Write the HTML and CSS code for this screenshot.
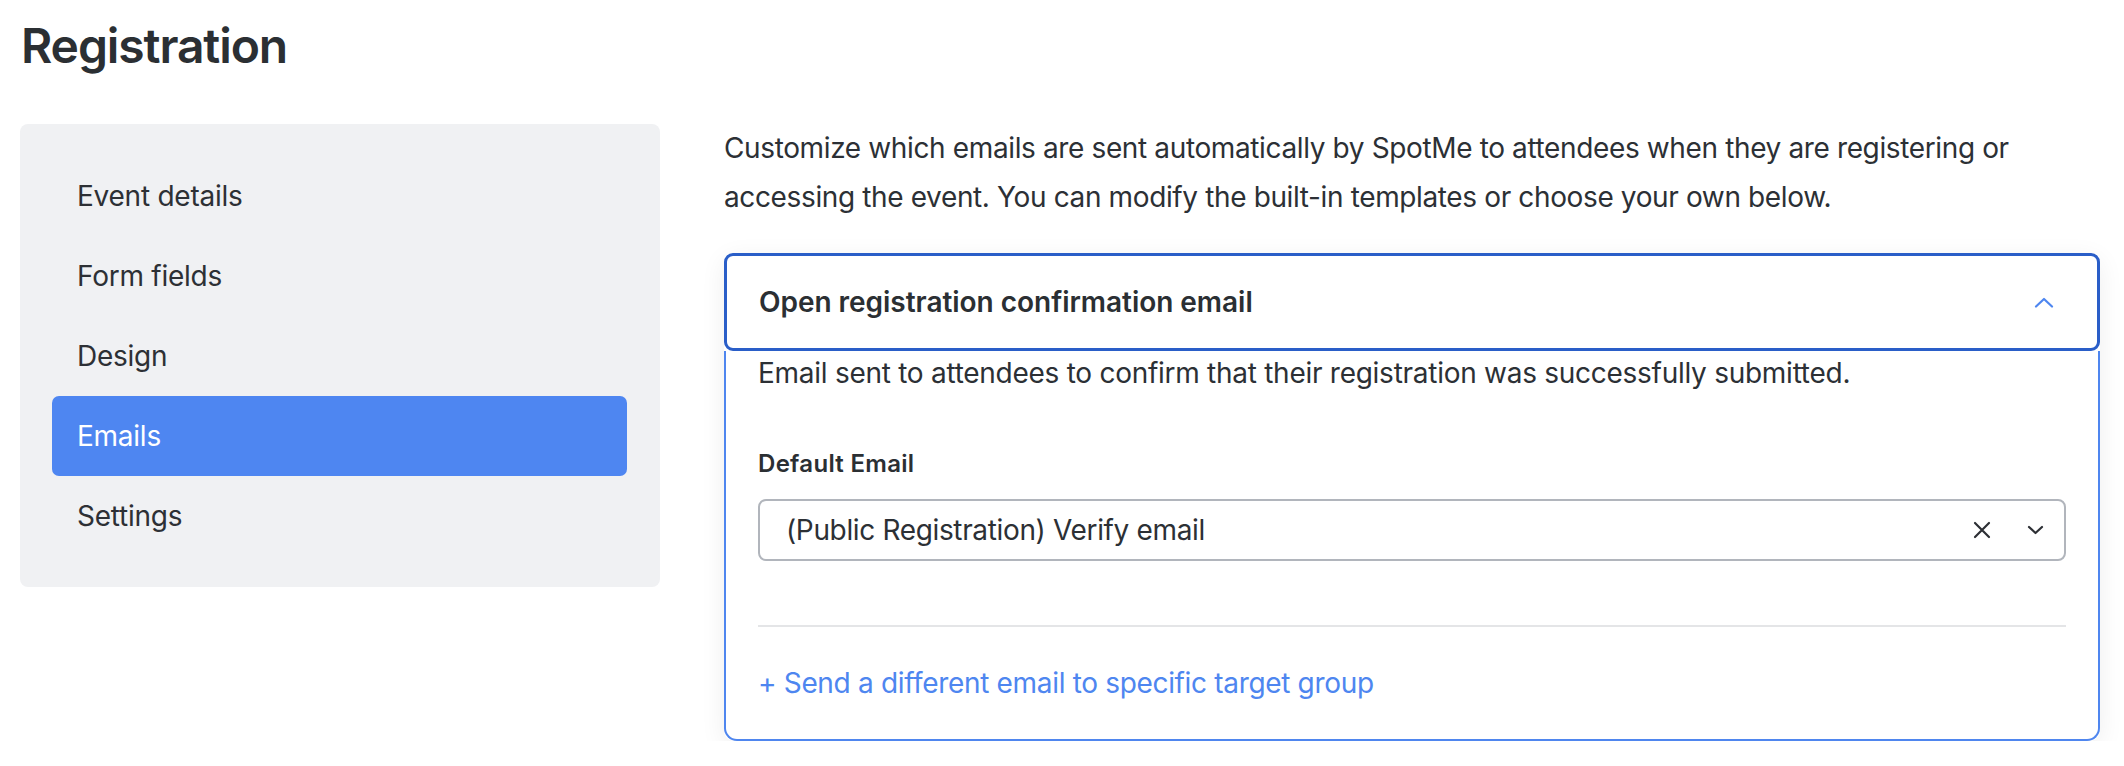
FILE: index.html
```html
<!DOCTYPE html>
<html lang="en">
<head>
<meta charset="utf-8">
<title>Registration</title>
<link rel="stylesheet" href="styles.css">
</head>
<body>
<div class="page">
  <h1 class="page-title">Registration</h1>
  <div class="layout">
    <nav class="sidenav">
      <a class="nav-item">Event details</a>
      <a class="nav-item">Form fields</a>
      <a class="nav-item">Design</a>
      <a class="nav-item active">Emails</a>
      <a class="nav-item">Settings</a>
    </nav>
    <main class="content">
      <p class="intro">Customize which emails are sent automatically by SpotMe to attendees when they are registering or accessing the event. You can modify the built-in templates or choose your own below.</p>
      <section class="card">
        <header class="card-header">
          <h2 class="card-title">Open registration confirmation email</h2>
          <svg class="chev-up" width="20" height="11" viewBox="0 0 20 11"><polyline points="2,9.5 10,2 18,9.5" fill="none" stroke="currentColor" stroke-width="2.2" stroke-linecap="round" stroke-linejoin="round"/></svg>
        </header>
        <div class="card-body">
          <p class="card-desc">Email sent to attendees to confirm that their registration was successfully submitted.</p>
          <label class="field-label">Default Email</label>
          <div class="select">
            <span class="select-value">(Public Registration) Verify email</span>
            <span class="select-icons">
              <svg class="icon-x" width="18" height="18" viewBox="0 0 18 18"><path d="M2 2L16 16M16 2L2 16" fill="none" stroke="currentColor" stroke-width="2.2" stroke-linecap="round"/></svg>
              <svg class="icon-down" width="17" height="10" viewBox="0 0 17 10"><polyline points="2,2 8.5,8 15,2" fill="none" stroke="currentColor" stroke-width="2.2" stroke-linecap="round" stroke-linejoin="round"/></svg>
            </span>
          </div>
          <hr class="divider">
          <a class="add-link">+ Send a different email to specific target group</a>
        </div>
      </section>
    </main>
  </div>
</div>
</body>
</html>
```

FILE: styles.css
```css
* { box-sizing: border-box; }
html, body { margin: 0; padding: 0; background: #ffffff; }
body {
  font-family: Inter, "Noto Sans", "Liberation Sans", sans-serif;
  color: #2c3035;
}
.page {
  padding: 0 24px 0 20px;
}
.page-title {
  margin: 17px 0 50px 1px;
  font-size: 48px;
  line-height: 57px;
  font-weight: 600;
  letter-spacing: -1.1px;
  color: #2b2f33;
}
.layout {
  display: flex;
  gap: 64px;
  align-items: flex-start;
}
.sidenav {
  flex: 0 0 640px;
  background: #f0f1f3;
  border-radius: 8px;
  padding: 32px 33px 31px 32px;
  display: flex;
  flex-direction: column;
}
.nav-item {
  height: 80px;
  display: flex;
  align-items: center;
  padding-left: 25px;
  font-size: 28px;
  color: #2d3035;
  border-radius: 7px;
  letter-spacing: -0.25px;
}
.nav-item.active {
  background: #4e86f1;
  color: #ffffff;
}
.content {
  flex: 1 1 auto;
  min-width: 0;
}
.intro {
  margin: 0 0 31px 0;
  font-size: 28px;
  line-height: 49px;
  letter-spacing: -0.37px;
  color: #2c3035;
}
.card {
  border-radius: 10px;
  box-shadow: 0 6px 26px rgba(0, 0, 0, 0.07);
  background: #fff;
}
.card-header {
  height: 98px;
  border: 3px solid #2a5ec8;
  border-radius: 9px;
  display: flex;
  align-items: center;
  justify-content: space-between;
  padding: 0 43px 0 32px;
}
.card-title {
  margin: 0;
  font-size: 28px;
  font-weight: 600;
  letter-spacing: -0.03px;
  color: #2b2f33;
}
.chev-up {
  color: #4e86f0;
  display: block;
}
.card-body {
  border: 2px solid #4f86ef;
  border-top: none;
  border-radius: 0 0 13px 13px;
  padding: 1px 32px 35px 32px;
}
.card-desc {
  margin: 0 0 52px 0;
  font-size: 28px;
  line-height: 42px;
  letter-spacing: -0.27px;
  color: #2c3035;
}
.field-label {
  display: block;
  font-size: 24px;
  line-height: 36px;
  font-weight: 600;
  letter-spacing: 0.3px;
  color: #2b2f33;
  margin-bottom: 17px;
}
.select {
  height: 62px;
  border: 2px solid #b1b5bc;
  border-radius: 8px;
  display: flex;
  align-items: center;
  justify-content: space-between;
  padding: 0 20px 0 26px;
}
.select-value {
  font-size: 28px;
  letter-spacing: -0.35px;
  color: #2c3035;
}
.select-icons {
  display: flex;
  align-items: center;
  gap: 36px;
  color: #2d3035;
}
.select-icons svg { display: block; }
.divider {
  border: none;
  height: 2px;
  background: #e4e5e7;
  margin: 64px 0 35px 0;
}
.add-link {
  display: block;
  font-size: 28px;
  line-height: 42px;
  letter-spacing: -0.33px;
  color: #4e86f0;
}
```
